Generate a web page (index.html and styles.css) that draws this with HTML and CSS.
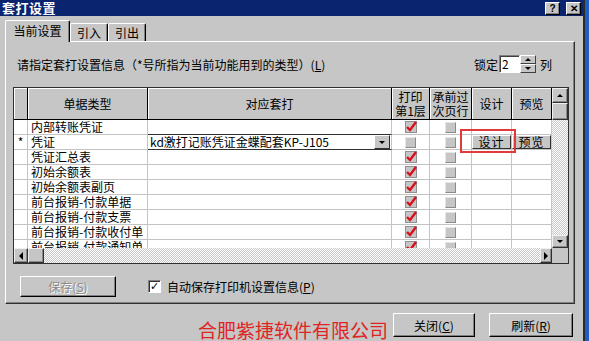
FILE: index.html
```html
<!DOCTYPE html>
<html lang="zh-CN">
<head>
    <meta charset="UTF-8">
    <title>套打设置</title>
    <link rel="stylesheet" href="styles.css">
</head>
<body>
<div class="window">
    <div class="titlebar">
        <span class="title">套打设置</span>
        <div class="caption-btns">
            <span class="cap-btn">?</span>
            <span class="cap-btn">✕</span>
        </div>
    </div>

    <div class="content">
        <div class="tabs">
            <span class="tab active">当前设置</span>
            <span class="tab">引入</span>
            <span class="tab">引出</span>
        </div>

        <div class="panel">
            <div class="hint-row">
                <span>请指定套打设置信息（*号所指为当前功能用到的类型）(<u>L</u>)</span>
                <div class="lock">
                    <span>锁定</span>
                    <span class="spin-input">2</span>
                    <span class="spin">
                        <span class="spin-btn"><i class="tri up"></i></span>
                        <span class="spin-btn"><i class="tri down"></i></span>
                    </span>
                    <span class="lock-unit">列</span>
                </div>
            </div>

            <div class="grid">
                <div class="grid-main">
                    <div class="grid-view">
                        <div class="row head">
                            <div class="hc"></div>
                            <div class="hc">单据类型</div>
                            <div class="hc">对应套打</div>
                            <div class="hc">打印<br>第1层</div>
                            <div class="hc">承前过<br>次页行</div>
                            <div class="hc">设计</div>
                            <div class="hc">预览</div>
                        </div>

                        <div class="row">
                            <div class="c ind"></div>
                            <div class="c">内部转账凭证</div>
                            <div class="c"></div>
                            <div class="c mid"><svg class="cb" viewBox="0 0 12 12"><rect x="0.5" y="0.5" width="11" height="11" fill="#c6c6c6" stroke="#909090"/><path d="M2 6 L5 9 L11 1" fill="none" stroke="#d8101c" stroke-width="2.4"/></svg></div>
                            <div class="c mid"><span class="box"></span></div>
                            <div class="c"></div>
                            <div class="c"></div>
                        </div>

                        <div class="row">
                            <div class="c ind">*</div>
                            <div class="c">凭证</div>
                            <div class="c combo">
                                <span class="combo-text">kd激打记账凭证金蝶配套KP-J105</span>
                                <span class="combo-btn"><i class="tri down"></i></span>
                            </div>
                            <div class="c mid"><span class="box"></span></div>
                            <div class="c mid"><span class="box"></span></div>
                            <div class="c cell-btn"><span class="mini-btn">设计</span></div>
                            <div class="c cell-btn"><span class="mini-btn">预览</span></div>
                        </div>

                        <div class="row">
                            <div class="c ind"></div>
                            <div class="c">凭证汇总表</div>
                            <div class="c"></div>
                            <div class="c mid"><svg class="cb" viewBox="0 0 12 12"><rect x="0.5" y="0.5" width="11" height="11" fill="#c6c6c6" stroke="#909090"/><path d="M2 6 L5 9 L11 1" fill="none" stroke="#d8101c" stroke-width="2.4"/></svg></div>
                            <div class="c mid"><span class="box"></span></div>
                            <div class="c"></div>
                            <div class="c"></div>
                        </div>

                        <div class="row">
                            <div class="c ind"></div>
                            <div class="c">初始余额表</div>
                            <div class="c"></div>
                            <div class="c mid"><svg class="cb" viewBox="0 0 12 12"><rect x="0.5" y="0.5" width="11" height="11" fill="#c6c6c6" stroke="#909090"/><path d="M2 6 L5 9 L11 1" fill="none" stroke="#d8101c" stroke-width="2.4"/></svg></div>
                            <div class="c mid"><span class="box"></span></div>
                            <div class="c"></div>
                            <div class="c"></div>
                        </div>

                        <div class="row">
                            <div class="c ind"></div>
                            <div class="c">初始余额表副页</div>
                            <div class="c"></div>
                            <div class="c mid"><svg class="cb" viewBox="0 0 12 12"><rect x="0.5" y="0.5" width="11" height="11" fill="#c6c6c6" stroke="#909090"/><path d="M2 6 L5 9 L11 1" fill="none" stroke="#d8101c" stroke-width="2.4"/></svg></div>
                            <div class="c mid"><span class="box"></span></div>
                            <div class="c"></div>
                            <div class="c"></div>
                        </div>

                        <div class="row">
                            <div class="c ind"></div>
                            <div class="c">前台报销-付款单据</div>
                            <div class="c"></div>
                            <div class="c mid"><svg class="cb" viewBox="0 0 12 12"><rect x="0.5" y="0.5" width="11" height="11" fill="#c6c6c6" stroke="#909090"/><path d="M2 6 L5 9 L11 1" fill="none" stroke="#d8101c" stroke-width="2.4"/></svg></div>
                            <div class="c mid"><span class="box"></span></div>
                            <div class="c"></div>
                            <div class="c"></div>
                        </div>

                        <div class="row">
                            <div class="c ind"></div>
                            <div class="c">前台报销-付款支票</div>
                            <div class="c"></div>
                            <div class="c mid"><svg class="cb" viewBox="0 0 12 12"><rect x="0.5" y="0.5" width="11" height="11" fill="#c6c6c6" stroke="#909090"/><path d="M2 6 L5 9 L11 1" fill="none" stroke="#d8101c" stroke-width="2.4"/></svg></div>
                            <div class="c mid"><span class="box"></span></div>
                            <div class="c"></div>
                            <div class="c"></div>
                        </div>

                        <div class="row">
                            <div class="c ind"></div>
                            <div class="c">前台报销-付款收付单</div>
                            <div class="c"></div>
                            <div class="c mid"><svg class="cb" viewBox="0 0 12 12"><rect x="0.5" y="0.5" width="11" height="11" fill="#c6c6c6" stroke="#909090"/><path d="M2 6 L5 9 L11 1" fill="none" stroke="#d8101c" stroke-width="2.4"/></svg></div>
                            <div class="c mid"><span class="box"></span></div>
                            <div class="c"></div>
                            <div class="c"></div>
                        </div>

                        <div class="row">
                            <div class="c ind"></div>
                            <div class="c">前台报销-付款通知单</div>
                            <div class="c"></div>
                            <div class="c mid"><svg class="cb" viewBox="0 0 12 12"><rect x="0.5" y="0.5" width="11" height="11" fill="#c6c6c6" stroke="#909090"/><path d="M2 6 L5 9 L11 1" fill="none" stroke="#d8101c" stroke-width="2.4"/></svg></div>
                            <div class="c mid"><span class="box"></span></div>
                            <div class="c"></div>
                            <div class="c"></div>
                        </div>
                    </div>

                    <div class="vscroll">
                        <span class="sb-btn v-up"><i class="tri up"></i></span>
                        <span class="sb-thumb v-thumb"></span>
                        <span class="sb-track"></span>
                        <span class="sb-btn v-down"><i class="tri down"></i></span>
                    </div>
                </div>

                <div class="hscroll">
                    <span class="sb-btn h-left"><i class="tri left"></i></span>
                    <span class="sb-thumb h-thumb"></span>
                    <span class="sb-track"></span>
                    <span class="sb-btn h-right"><i class="tri right"></i></span>
                    <span class="sb-corner"></span>
                </div>

                <div class="highlight"></div>
            </div>

            <div class="panel-foot">
                <span class="btn save disabled">保存(<u>S</u>)</span>
                <label class="check">
                    <span class="check-box">✓</span>
                    <span>自动保存打印机设置信息(<u>P</u>)</span>
                </label>
            </div>
        </div>

        <div class="footer">
            <span class="company">合肥紫捷软件有限公司</span>
            <span class="btn close">关闭(<u>C</u>)</span>
            <span class="btn refresh">刷新(<u>R</u>)</span>
        </div>
    </div>
</div>
</body>
</html>
```

FILE: styles.css
```css
* {
    box-sizing: border-box;
}

body {
    margin: 0;
    background-color: #1f5fc0;
    font-family: "Noto Sans CJK SC", sans-serif;
    font-size: 12px;
    color: #000;
}

u {
    text-decoration: underline;
}

.window {
    width: 585px;
    height: 341px;
    background-color: #c6c6c6;
    border-right: 2px solid #2a2a2a;
    overflow: hidden;
}

/* title bar */
.titlebar {
    height: 16px;
    background-color: #0a2470;
    display: flex;
    align-items: center;
    justify-content: space-between;
    padding: 0 2px 0 2px;
}

.title {
    color: #fff;
    font-weight: bold;
    font-size: 13px;
    line-height: 16px;
    letter-spacing: 0.5px;
}

.caption-btns {
    display: flex;
    gap: 6px;
}

.cap-btn {
    width: 15px;
    height: 13px;
    background-color: #c6c6c6;
    border: 1px solid;
    border-color: #fff #000 #000 #fff;
    box-shadow: inset -1px -1px #808080;
    font: bold 10px/11px "Liberation Sans", sans-serif;
    text-align: center;
}

/* tabs + panel */
.content {
    padding: 4px 8px 0 5px;
}

.tabs {
    display: flex;
    align-items: flex-end;
    height: 22px;
    margin-bottom: -1px;
    position: relative;
}

.tab {
    height: 18px;
    margin-bottom: 1px;
    padding: 0 6px;
    line-height: 17px;
    white-space: nowrap;
    background-color: #c6c6c6;
    border-top: 1px solid #fff;
    border-left: 1px solid #fff;
    border-right: 1px solid #000;
    box-shadow: inset -1px 0 #808080;
    border-radius: 2px 2px 0 0;
}

.tab.active {
    height: 22px;
    margin-bottom: 0;
    width: 65px;
    padding: 0;
    text-align: center;
    line-height: 20px;
}

.panel {
    width: 570px;
    height: 263px;
    border: 1px solid;
    border-color: #fff #303030 #303030 #fff;
    box-shadow: inset -1px -1px #808080;
    padding: 12px 6px 0 7px;
}

.hint-row {
    height: 20px;
    display: flex;
    align-items: center;
    justify-content: space-between;
    padding: 0 16px 0 4px;
}

.lock {
    display: flex;
    align-items: center;
}

.spin-input {
    width: 21px;
    height: 18px;
    margin-left: 1px;
    background-color: #fff;
    border: 1px solid;
    border-color: #808080 #fff #fff #808080;
    box-shadow: inset 1px 1px #404040;
    padding-left: 2px;
    line-height: 15px;
}

.spin {
    width: 16px;
    height: 18px;
    display: flex;
    flex-direction: column;
}

.spin-btn {
    flex: 1;
    display: flex;
    align-items: center;
    justify-content: center;
    background-color: #c6c6c6;
    border: 1px solid;
    border-color: #fff #404040 #404040 #fff;
}

.lock-unit {
    margin-left: 4px;
}

/* triangles */
.tri {
    width: 0;
    height: 0;
    display: block;
}

.tri.up {
    border-left: 3px solid transparent;
    border-right: 3px solid transparent;
    border-bottom: 3px solid #000;
}

.tri.down {
    border-left: 3px solid transparent;
    border-right: 3px solid transparent;
    border-top: 3px solid #000;
}

.tri.left {
    border-top: 4px solid transparent;
    border-bottom: 4px solid transparent;
    border-right: 4px solid #000;
}

.tri.right {
    border-top: 4px solid transparent;
    border-bottom: 4px solid transparent;
    border-left: 4px solid #000;
}

/* grid */
.grid {
    position: relative;
    margin-top: 13px;
    width: 556px;
    border: 1px solid #303030;
}

.grid-main {
    display: flex;
    height: 160px;
}

.grid-view {
    width: 538px;
    overflow: hidden;
    background-color: #fff;
}

.row {
    display: grid;
    grid-template-columns: 14px 120px 244px 38px 42px 40px 40px;
    height: 15px;
}

.row.head {
    height: 32px;
}

.hc {
    background-color: #c6c6c6;
    border-right: 1px solid #000;
    border-bottom: 1px solid #000;
    box-shadow: inset 1px 1px #fff;
    display: flex;
    align-items: center;
    justify-content: center;
    text-align: center;
    line-height: 14px;
}

.c {
    border-right: 1px solid #c4c4c4;
    border-bottom: 1px solid #c4c4c4;
    padding-left: 3px;
    font-size: 12px;
    line-height: 14px;
    white-space: nowrap;
}

.c.ind {
    padding-left: 0;
    text-align: center;
}

.c.mid {
    padding-left: 0;
    display: flex;
    align-items: center;
    justify-content: center;
}

.cb {
    width: 12px;
    height: 12px;
    display: block;
}

.box {
    width: 11px;
    height: 11px;
    background-color: #c6c6c6;
    border: 1px solid;
    border-color: #e6e6e6 #8a8a8a #8a8a8a #e6e6e6;
}

.c.combo {
    display: flex;
    padding-left: 2px;
    border-top: 1px solid #303030;
    border-bottom: 1px solid #303030;
    margin-top: -1px;
    height: 16px;
}

.combo-text {
    flex: 1;
    line-height: 14px;
}

.combo-btn {
    width: 16px;
    margin-right: 1px;
    display: flex;
    align-items: center;
    justify-content: center;
    background-color: #c6c6c6;
    border: 1px solid;
    border-color: #fff #303030 #303030 #fff;
}

.c.cell-btn {
    padding: 0;
    display: flex;
}

.mini-btn {
    flex: 1;
    background-color: #c6c6c6;
    border: 1px solid;
    border-color: #fff #303030 #303030 #fff;
    text-align: center;
    line-height: 12px;
    letter-spacing: 1px;
}

/* scrollbars */
.vscroll {
    width: 16px;
    display: flex;
    flex-direction: column;
}

.hscroll {
    display: flex;
    height: 15px;
}

.sb-btn, .sb-thumb, .sb-corner {
    background-color: #c6c6c6;
    border: 1px solid;
    border-color: #f0f0f0 #303030 #303030 #f0f0f0;
    box-shadow: inset -1px -1px #8a8a8a;
    display: flex;
    align-items: center;
    justify-content: center;
}

.sb-corner {
    border: none;
    box-shadow: none;
    width: 16px;
}

.sb-track {
    flex: 1;
    background: repeating-conic-gradient(#c6c6c6 0 25%, #fff 0 50%) 0 0 / 2px 2px;
}

.v-up {
    height: 15px;
}

.v-thumb {
    height: 17px;
}

.v-down {
    height: 13px;
}

.h-left {
    width: 14px;
}

.h-thumb {
    width: 16px;
}

.h-right {
    width: 12px;
}

.highlight {
    position: absolute;
    left: 446px;
    top: 41px;
    width: 56px;
    height: 24px;
    border: 2px solid #e03a3a;
}

/* buttons */
.btn {
    display: inline-flex;
    align-items: center;
    justify-content: center;
    background-color: #c6c6c6;
    border: 1px solid;
    border-color: #fff #000 #000 #fff;
    box-shadow: inset -1px -1px #808080;
    font-size: 12px;
}

.btn.disabled {
    color: #8a8a8a;
    text-shadow: 1px 1px #fff;
}

.panel-foot {
    display: flex;
    align-items: center;
    margin-top: 12px;
    padding-left: 7px;
}

.btn.save {
    width: 96px;
    height: 21px;
}

.check {
    display: flex;
    align-items: center;
    margin-left: 32px;
}

.check-box {
    width: 13px;
    height: 13px;
    margin-right: 6px;
    background-color: #fff;
    border: 1px solid;
    border-color: #808080 #fff #fff #808080;
    box-shadow: inset 1px 1px #303030;
    font: bold 11px/11px "DejaVu Sans", sans-serif;
    text-align: center;
}

.footer {
    width: 570px;
    display: flex;
    align-items: flex-start;
    justify-content: flex-end;
    margin-top: 9px;
    padding-right: 2px;
}

.company {
    color: #e02424;
    font-size: 19px;
    line-height: 22px;
    margin-top: 6px;
    margin-right: 5px;
}

.btn.close {
    width: 82px;
    height: 24px;
    margin-right: 14px;
}

.btn.refresh {
    width: 84px;
    height: 24px;
}
```
